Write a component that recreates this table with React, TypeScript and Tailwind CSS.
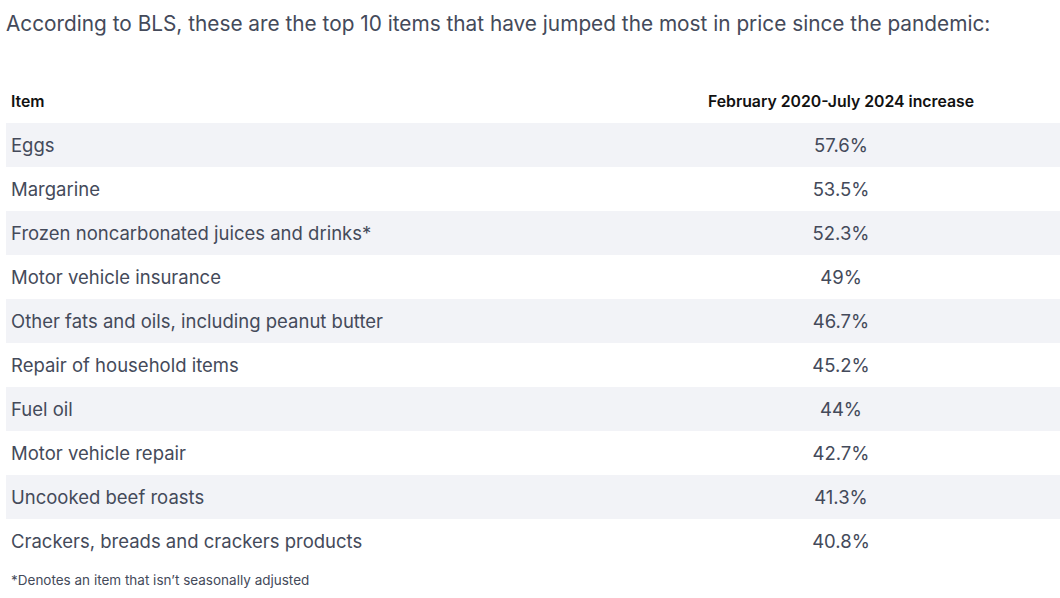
const rows = [
  ["Eggs", "57.6%"],
  ["Margarine", "53.5%"],
  ["Frozen noncarbonated juices and drinks*", "52.3%"],
  ["Motor vehicle insurance", "49%"],
  ["Other fats and oils, including peanut butter", "46.7%"],
  ["Repair of household items", "45.2%"],
  ["Fuel oil", "44%"],
  ["Motor vehicle repair", "42.7%"],
  ["Uncooked beef roasts", "41.3%"],
  ["Crackers, breads and crackers products", "40.8%"],
];

export default function App() {
  return (
    <div className="min-h-screen bg-white pl-[6px] font-['Inter','Liberation_Sans',sans-serif] text-[#444a5a]">
      <p className="pt-[9px] text-[20.8px] leading-[30px]">
        According to BLS, these are the top 10 items that have jumped the most in price since the pandemic:
      </p>
      <div className="mt-[41px]">
        <div className="grid h-[43px] grid-cols-[616px_1fr] items-center pt-[1px] text-[15.8px] font-semibold text-[#111111]">
          <div className="pl-[5px]">Item</div>
          <div className="text-center">February 2020-July 2024 increase</div>
        </div>
        {rows.map(([item, pct], i) => (
          <div
            key={item}
            className={
              "grid h-[44px] grid-cols-[616px_1fr] items-center pt-[1px] text-[18.5px] " +
              (i % 2 === 0 ? "bg-[#f2f3f7]" : "bg-white")
            }
          >
            <div className="pl-[5px]">{item}</div>
            <div className="text-center">{pct}</div>
          </div>
        ))}
      </div>
      <p className="pt-[7px] pl-[5px] text-[13.5px]">*Denotes an item that isn’t seasonally adjusted</p>
    </div>
  );
}
